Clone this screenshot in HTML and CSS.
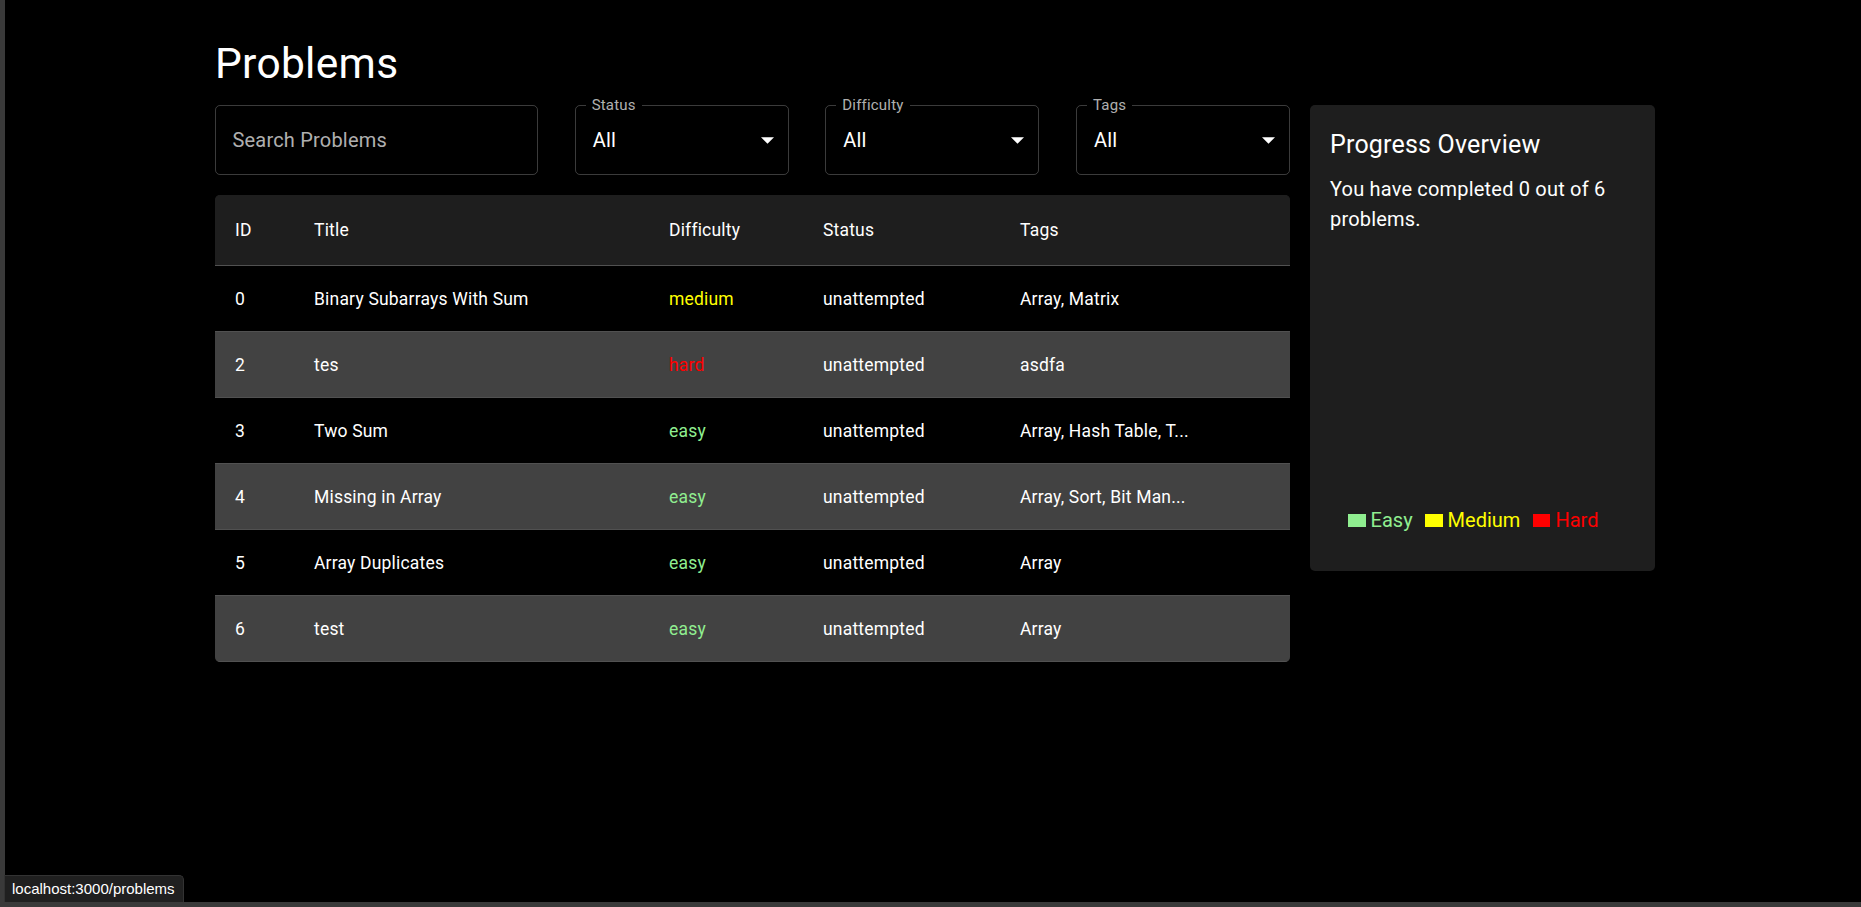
FILE: index.html
```html
<!DOCTYPE html>
<html lang="en">
<head>
<meta charset="utf-8">
<title>Problems</title>
<link rel="stylesheet" href="styles.css">
</head>
<body>
<div class="frame">
  <main class="page">
    <h1 class="page-title">Problems</h1>
    <div class="layout">
      <section class="main-col">
        <div class="filters">
          <div class="field field-search">Search Problems</div>
          <div class="field field-select">
            <span class="field-label">Status</span>
            <span class="field-value">All</span>
            <svg class="arrow" width="13" height="7" viewBox="0 0 10 5"><path d="M0 0l5 5 5-5z" fill="#fff"/></svg>
          </div>
          <div class="field field-select">
            <span class="field-label">Difficulty</span>
            <span class="field-value">All</span>
            <svg class="arrow" width="13" height="7" viewBox="0 0 10 5"><path d="M0 0l5 5 5-5z" fill="#fff"/></svg>
          </div>
          <div class="field field-select">
            <span class="field-label">Tags</span>
            <span class="field-value">All</span>
            <svg class="arrow" width="13" height="7" viewBox="0 0 10 5"><path d="M0 0l5 5 5-5z" fill="#fff"/></svg>
          </div>
        </div>
        <div class="table-wrap">
          <table class="problems">
            <colgroup>
              <col class="c-id"><col class="c-title"><col class="c-diff"><col class="c-status"><col class="c-tags">
            </colgroup>
            <thead>
              <tr><th>ID</th><th>Title</th><th>Difficulty</th><th>Status</th><th>Tags</th></tr>
            </thead>
            <tbody>
              <tr><td>0</td><td>Binary Subarrays With Sum</td><td class="medium">medium</td><td>unattempted</td><td>Array, Matrix</td></tr>
              <tr><td>2</td><td>tes</td><td class="hard">hard</td><td>unattempted</td><td>asdfa</td></tr>
              <tr><td>3</td><td>Two Sum</td><td class="easy">easy</td><td>unattempted</td><td>Array, Hash Table, T...</td></tr>
              <tr><td>4</td><td>Missing in Array</td><td class="easy">easy</td><td>unattempted</td><td>Array, Sort, Bit Man...</td></tr>
              <tr><td>5</td><td>Array Duplicates</td><td class="easy">easy</td><td>unattempted</td><td>Array</td></tr>
              <tr><td>6</td><td>test</td><td class="easy">easy</td><td>unattempted</td><td>Array</td></tr>
            </tbody>
          </table>
        </div>
      </section>
      <aside class="card">
        <h2 class="card-title">Progress Overview</h2>
        <p class="card-text">You have completed 0 out of 6 problems.</p>
        <div class="chart">
          <ul class="legend">
            <li class="legend-item easy"><span class="swatch sw-easy"></span>Easy</li>
            <li class="legend-item medium"><span class="swatch sw-medium"></span>Medium</li>
            <li class="legend-item hard"><span class="swatch sw-hard"></span>Hard</li>
          </ul>
        </div>
      </aside>
    </div>
  </main>
</div>
<div class="status-bubble">localhost:3000/problems</div>
</body>
</html>
```
FILE: styles.css
```css
* { box-sizing: border-box; }
html, body { margin: 0; padding: 0; }
body {
  background: #000;
  color: #fff;
  font-family: Roboto, "Liberation Sans", sans-serif;
  overflow: hidden;
  position: relative;
  height: 907px;
}
.frame {
  height: 907px;
  border-left: 5px solid #3a3a3a;
  border-bottom: 5px solid #3a3a3a;
}
.page {
  width: 1440px;
  margin-left: 210px;
  padding-top: 38px;
}
.page-title {
  font-size: 42.5px;
  line-height: 1.235;
  font-weight: 400;
  letter-spacing: 0.3px;
  margin: 0 0 15px;
}
.layout {
  display: flex;
  gap: 20px;
  align-items: flex-start;
}
.main-col { width: 1075px; }
.filters {
  display: flex;
  justify-content: space-between;
  margin-bottom: 20px;
}
.field {
  position: relative;
  height: 70px;
  border: 1px solid rgba(255,255,255,0.23);
  border-radius: 5px;
  display: flex;
  align-items: center;
  font-size: 20px;
  letter-spacing: 0.19px;
}
.field-search {
  width: 323px;
  padding-left: 16.5px;
  color: rgba(255,255,255,0.7);
}
.field-select {
  width: 214px;
  padding: 0 14px 0 17px;
  justify-content: space-between;
}
.field-label {
  position: absolute;
  top: -10.5px;
  left: 10px;
  padding: 0 6px;
  background: #000;
  font-size: 15px;
  line-height: 18px;
  color: rgba(255,255,255,0.7);
}
.arrow { display: block; }
.table-wrap {
  border-radius: 5px;
  overflow: hidden;
  background: #1e1e1e;
}
.problems {
  width: 100%;
  border-collapse: collapse;
  table-layout: fixed;
  font-size: 17.5px;
  letter-spacing: 0.19px;
}
.c-id { width: 79px; }
.c-title { width: 355px; }
.c-diff { width: 154px; }
.c-status { width: 197px; }
.c-tags { width: 290px; }
.problems th, .problems td {
  padding: 20px;
  text-align: left;
  border-bottom: 1px solid #515151;
  white-space: nowrap;
}
.problems th {
  line-height: 30px;
  font-weight: 400;
  background: #1e1e1e;
}
.problems td { line-height: 25px; padding: 20.5px 20px 19.5px; }
.problems tbody tr:nth-child(odd) td { background: #000; }
.problems tbody tr:nth-child(even) td { background: #424242; }
.easy { color: #90ee90; }
.medium { color: #ffff00; }
.hard { color: #ff0000; }
.card {
  width: 345px;
  background: #1e1e1e;
  border-radius: 5px;
  padding: 20px 20px 30px;
}
.card-title {
  font-size: 25px;
  line-height: 1.6;
  font-weight: 400;
  letter-spacing: 0.19px;
  margin: 0 0 8.75px;
}
.card-text {
  font-size: 20px;
  line-height: 1.5;
  letter-spacing: 0.19px;
  margin: 0;
}
.chart {
  height: 307px;
  display: flex;
  align-items: flex-end;
  justify-content: center;
  padding-bottom: 9px;
}
.legend {
  display: flex;
  list-style: none;
  margin: 0;
  padding: 0 6px 0 0;
  font-size: 20px;
}
.legend-item {
  display: flex;
  align-items: center;
  margin-right: 12.5px;
}
.swatch {
  display: inline-block;
  width: 17.5px;
  height: 13px;
  margin-right: 5px;
}
.sw-easy { background: #90ee90; }
.sw-medium { background: #ffff00; }
.sw-hard { background: #ff0000; }
.status-bubble {
  position: absolute;
  left: 4px;
  bottom: 5px;
  height: 27px;
  padding: 0 8px 0 7px;
  background: #202020;
  border: 1px solid #333;
  border-bottom: none;
  border-radius: 0 5px 0 0;
  font-family: "Liberation Sans", Arial, sans-serif;
  font-size: 15px;
  line-height: 26px;
  color: #fff;
}
```
